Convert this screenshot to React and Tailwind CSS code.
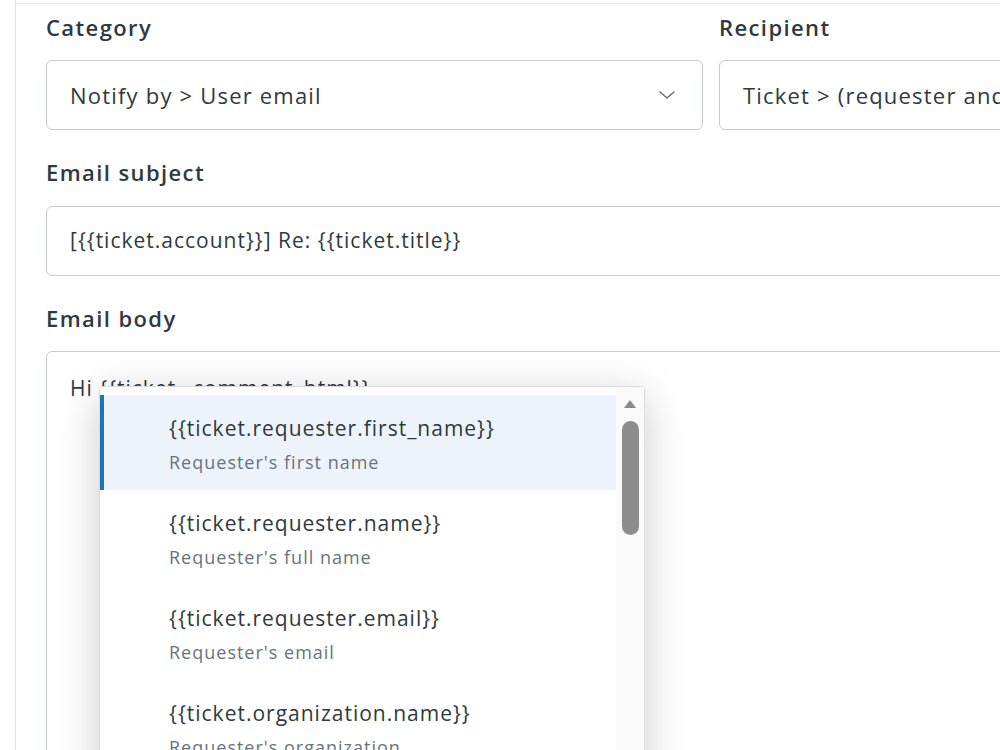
import React from "react";

const items = [
  { tag: "{{ticket.requester.first_name}}", desc: "Requester's first name", active: true },
  { tag: "{{ticket.requester.name}}", desc: "Requester's full name" },
  { tag: "{{ticket.requester.email}}", desc: "Requester's email" },
  { tag: "{{ticket.organization.name}}", desc: "Requester's organization" },
];

const Chevron = () => (
  <svg width="18" height="10" viewBox="0 0 18 10" fill="none" aria-hidden="true">
    <path d="M2 2l7 6 7-6" stroke="#68737d" strokeWidth="1.6" strokeLinecap="round" strokeLinejoin="round" />
  </svg>
);

const Label = ({ children, className = "" }) => (
  <div className={`text-[22px] leading-[28px] font-semibold tracking-[1.4px] text-[#2f3941] ${className}`}>{children}</div>
);

export default function App() {
  return (
    <div className="relative flex w-[1000px] h-[750px] overflow-hidden bg-white font-['Open_Sans',sans-serif]">
      {/* left rail */}
      <div className="w-[16px] shrink-0 border-r border-[#dcdfe1]" />

      <div className="mt-[3px] flex-1 border-t border-[#e4e6e8] pl-[30px] pt-[9px]">
        {/* category / recipient */}
        <div className="flex gap-[16px] w-[1400px]">
          <div className="w-[657px]">
            <Label className="mb-[19px]">Category</Label>
            <div className="flex h-[70px] items-center justify-between rounded-[6px] border border-[#c7cccf] pl-[23px] pr-[26px]">
              <span className="text-[22px] tracking-[1.2px] text-[#2f3941]">Notify by &gt; User email</span>
              <Chevron />
            </div>
          </div>
          <div className="w-[657px]">
            <Label className="mb-[19px]">Recipient</Label>
            <div className="flex h-[70px] items-center rounded-[6px] border border-[#c7cccf] pl-[23px]">
              <span className="whitespace-nowrap text-[22px] tracking-[1.2px] text-[#2f3941]">Ticket &gt; (requester and CCs)</span>
            </div>
          </div>
        </div>

        {/* subject */}
        <Label className="mt-[28px] mb-[20px]">Email subject</Label>
        <div className="flex h-[70px] w-[1400px] items-center rounded-[6px] border border-[#c7cccf] pl-[23px]">
          <span className="text-[21px] tracking-[1px] text-[#2f3941]">[{"{{ticket.account}}"}] Re: {"{{ticket.title}}"}</span>
        </div>

        {/* body */}
        <Label className="mt-[28px] mb-[19px]">Email body</Label>
        <div className="relative h-[500px] w-[1400px] rounded-[6px] border border-[#c7cccf] pl-[23px] pt-[22px]">
          <span className="text-[21px] leading-[28px] tracking-[1px] text-[#2f3941]">Hi {"{{ticket._comment_html}}"}</span>

          {/* autocomplete menu */}
          <div className="absolute left-[52px] top-[34px] flex w-[546px] h-[420px] rounded-[4px] border border-[#d8dcde] bg-white shadow-[0_10px_44px_rgba(0,0,0,0.2)]">
            <div className="flex-1 pt-[8px]">
              {items.map((it) => (
                <div
                  key={it.tag}
                  className={`h-[95px] border-l-[4px] pl-[65px] pt-[19px] ${
                    it.active ? "border-[#1f73b7] bg-[#edf3fa]" : "border-transparent"
                  }`}
                >
                  <div className="whitespace-nowrap text-[21px] leading-[28px] tracking-[1px] text-[#2f3941]">{it.tag}</div>
                  <div className="mt-[7px] whitespace-nowrap text-[18px] leading-[26px] tracking-[1px] text-[#68737d]">{it.desc}</div>
                </div>
              ))}
            </div>
            {/* scrollbar */}
            <div className="w-[28px] bg-[#fafafa] flex flex-col items-center pt-[12px]">
              <svg width="14" height="10" viewBox="0 0 14 10" aria-hidden="true">
                <path d="M7 1L13 9H1z" fill="#8a8a8a" />
              </svg>
              <div className="mt-[12px] h-[114px] w-[17px] rounded-full bg-[#8c8c8c]" />
            </div>
          </div>
        </div>
      </div>
    </div>
  );
}
